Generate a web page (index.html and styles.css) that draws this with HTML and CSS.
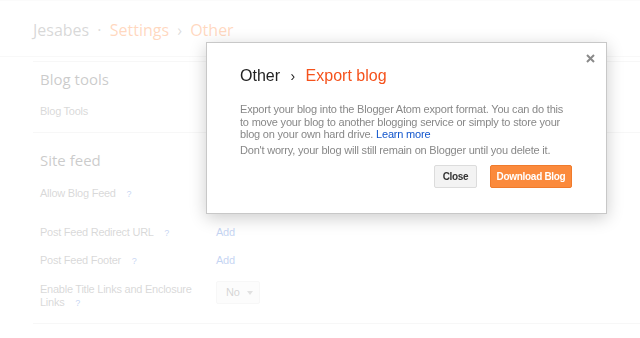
FILE: index.html
```html
<!DOCTYPE html>
<html lang="en">
<head>
  <meta charset="UTF-8">
  <title>Settings - Other</title>
  <link rel="stylesheet" href="styles.css">
</head>
<body>
  <header class="topbar">
    <h1 class="crumbs">
      <span class="blog-name">Jesabes</span>
      <span class="dot">·</span>
      <span class="crumb">Settings</span>
      <span class="sep">›</span>
      <span class="crumb">Other</span>
    </h1>
  </header>

  <main class="content">
    <section class="section tools">
      <h2>Blog tools</h2>
      <div class="row"><span class="label">Blog Tools</span></div>
    </section>

    <section class="section feed">
      <h2>Site feed</h2>
      <div class="row first">
        <span class="label">Allow Blog Feed <span class="help">?</span></span>
      </div>
      <div class="row">
        <span class="label">Post Feed Redirect URL <span class="help">?</span></span>
        <a class="add" href="#">Add</a>
      </div>
      <div class="row third">
        <span class="label">Post Feed Footer <span class="help">?</span></span>
        <a class="add" href="#">Add</a>
      </div>
      <div class="row">
        <span class="label">Enable Title Links and Enclosure Links <span class="help">?</span></span>
        <span class="select">No <span class="caret"></span></span>
      </div>
    </section>
  </main>

  <div class="overlay"></div>

  <div class="dialog">
    <button class="dialog-close" aria-label="Close">
      <svg width="9" height="9" viewBox="0 0 9 9"><path d="M1 1L8 8M8 1L1 8" stroke="#8a8a8a" stroke-width="2"/></svg>
    </button>
    <h3 class="dialog-title">Other <span class="sep">›</span> <span class="accent">Export blog</span></h3>
    <p>Export your blog into the Blogger Atom export format. You can do this to move your blog to another blogging service or simply to store your blog on your own hard drive. <a href="#">Learn more</a></p>
    <p class="note">Don't worry, your blog will still remain on Blogger until you delete it.</p>
    <div class="dialog-buttons">
      <button class="btn btn-close">Close</button>
      <button class="btn btn-orange">Download Blog</button>
    </div>
  </div>
</body>
</html>
```

FILE: styles.css
```css
body {
  margin: 0;
  font-family: Arial, "Liberation Sans", sans-serif;
  color: #666;
  background: #fff;
  border-top: 1px solid #eee;
}
.topbar {
  height: 55px;
  border-bottom: 1px solid #e4e4e4;
  padding: 0 0 0 33px;
}
.crumbs {
  margin: 0;
  padding-top: 17px;
  font-family: "Open Sans", sans-serif;
  font-weight: normal;
  font-size: 16px;
  line-height: 24px;
}
.crumbs .blog-name { color: #666; }
.crumbs .dot { color: #777; margin: 0 4px; }
.crumbs .crumb { color: #f60; }
.crumbs .sep { color: #777; margin: 0 4px; }

.content {
  margin-left: 33px;
  margin-top: 4px;
}
.section {
  border-top: 1px solid #ddd;
  padding-left: 7px;
}
.section h2 {
  margin: 0;
  font-family: "Open Sans", sans-serif;
  font-weight: normal;
  font-size: 15px;
  line-height: 20px;
  color: #333;
}
.tools { padding-top: 7px; padding-bottom: 14px; }
.tools h2 { margin-bottom: 16px; }
.feed { padding-top: 17px; padding-bottom: 14px; border-bottom: 1px solid #ddd; }
.feed h2 { margin-bottom: 17px; }

.row {
  display: grid;
  grid-template-columns: 176px 1fr;
  font-size: 11px;
  line-height: 13px;
  letter-spacing: -0.25px;
  margin-bottom: 15px;
}
.row.first { margin-bottom: 26px; }
.row.third { margin-bottom: 16px; }
.row:last-child { margin-bottom: 0; }
.label { color: #666; padding-right: 16px; }
.help {
  color: #15c;
  font-size: 9px;
  line-height: 9px;
  margin-left: 8px;
}
.add {
  color: #15c;
  text-decoration: none;
}
.select {
  justify-self: start;
  display: flex;
  align-items: center;
  gap: 7px;
  height: 21px;
  margin-top: -2px;
  padding: 0 6px 0 9px;
  border: 1px solid #ddd;
  border-radius: 2px;
  background: #f3f3f3;
  color: #555;
}
.caret {
  width: 0;
  height: 0;
  border-left: 3px solid transparent;
  border-right: 3px solid transparent;
  border-top: 4px solid #888;
}

.overlay {
  position: fixed;
  inset: 0;
  background: rgba(255, 255, 255, 0.75);
}

.dialog {
  position: absolute;
  left: 206px;
  top: 42px;
  width: 332px;
  height: 123px;
  padding: 23px 34px 24px 33px;
  background: #fff;
  border: 1px solid #c8c8c8;
  box-shadow: 0 4px 16px rgba(0, 0, 0, 0.2);
}
.dialog-close {
  position: absolute;
  top: 11px;
  right: 11px;
  padding: 0;
  border: 0;
  background: none;
  line-height: 0;
}
.dialog-title {
  margin: 0 0 17px;
  font-weight: normal;
  font-size: 16px;
  line-height: 20px;
  color: #222;
}
.dialog-title .sep { margin: 0 6px; font-size: 14px; }
.dialog-title .accent { color: #f5521c; }
.dialog p {
  margin: 0 0 3px;
  font-size: 11px;
  line-height: 12.5px;
  letter-spacing: -0.2px;
  color: #888;
}
.dialog p a { color: #15c; text-decoration: none; }
.dialog-buttons {
  display: flex;
  justify-content: flex-end;
  gap: 13px;
  margin-top: 9px;
}
.btn {
  height: 23px;
  padding: 0;
  font-family: Arial, "Liberation Sans", sans-serif;
  font-size: 10px;
  font-weight: bold;
  letter-spacing: -0.3px;
  color: #333;
  background: #f3f3f3;
  border: 1px solid #dcdcdc;
  border-radius: 2px;
}
.btn-close { width: 43px; }
.btn-orange {
  width: 82px;
  color: #fff;
  background: #fb8a3c;
  border-color: #f07b2c;
}
```
